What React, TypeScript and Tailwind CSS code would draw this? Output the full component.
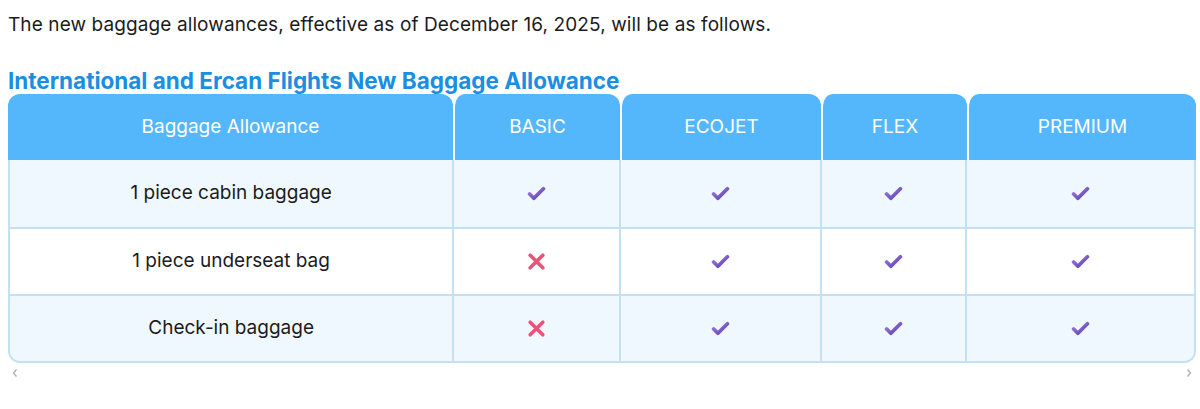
import React from "react";

const cols = ["w-[445px]", "w-[167px]", "w-[201px]", "w-[146px]", "w-[229px]"];
const heads = ["Baggage Allowance", "BASIC", "ECOJET", "FLEX", "PREMIUM"];

const rows: { label: string; values: boolean[] }[] = [
  { label: "1 piece cabin baggage", values: [true, true, true, true] },
  { label: "1 piece underseat bag", values: [false, true, true, true] },
  { label: "Check-in baggage", values: [false, true, true, true] },
];

const Check = () => (
  <svg width="19" height="15" viewBox="0 0 18 14">
    <defs>
      <linearGradient id="chk" x1="0" y1="0" x2="1" y2="1">
        <stop offset="0" stopColor="#9b7ee0" />
        <stop offset="1" stopColor="#5e3fb0" />
      </linearGradient>
    </defs>
    <path
      d="M2.5 7.5 L6.5 11.5 L15.5 2.5"
      fill="none"
      stroke="url(#chk)"
      strokeWidth="3.6"
      strokeLinecap="round"
      strokeLinejoin="round"
    />
  </svg>
);

const Cross = () => (
  <svg width="19" height="19" viewBox="0 0 18 18">
    <path
      d="M3 3 L15 15 M15 3 L3 15"
      fill="none"
      stroke="#ea5479"
      strokeWidth="3.4"
      strokeLinecap="round"
    />
  </svg>
);

export default function App() {
  return (
    <div className="bg-white px-2 pt-[13px] font-['Inter',sans-serif] text-[#1b1b1b]">
      {/* Intro */}
      <p className="text-[19px] leading-[23px] tracking-[0.1px]">
        The new baggage allowances, effective as of December 16, 2025, will be as follows.
      </p>

      <h2 className="mt-[31px] text-[22.5px] font-bold leading-[27px] text-[#1a8ee3]">
        International and Ercan Flights New Baggage Allowance
      </h2>

      {/* Table */}
      <div className="w-[1188px]">
        <div className="flex">
          {heads.map((h, i) => (
            <div
              key={h}
              className={`${cols[i]} flex h-[66px] items-center justify-center rounded-t-[12px] bg-[#55b7fb] text-[19px] text-white ${
                i > 0 ? "border-l-2 border-white" : ""
              }`}
            >
              {h}
            </div>
          ))}
        </div>
        <div className="overflow-hidden rounded-b-[12px] border-2 border-t-0 border-[#c3e1f3]">
          {rows.map((r, ri) => (
            <div
              key={r.label}
              className={`flex h-[67px] ${ri % 2 === 0 ? "bg-[#eef8fe]" : "bg-white"} ${
                ri > 0 ? "border-t-2 border-[#c3e1f3]" : ""
              }`}
            >
              <div className="flex w-[443px] items-center justify-center text-[19px]">
                {r.label}
              </div>
              {r.values.map((v, vi) => (
                <div
                  key={vi}
                  className={`${cols[vi + 1]} flex items-center justify-center border-l-2 border-[#c3e1f3]`}
                >
                  {v ? <Check /> : <Cross />}
                </div>
              ))}
            </div>
          ))}
        </div>
        {/* scroll hints */}
        <div className="mt-[5px] flex justify-between px-[3px] text-[#b0b0b0]">
          <svg width="8" height="10" viewBox="0 0 8 10">
            <path d="M5.5 1.5 L2.5 5 L5.5 8.5" fill="none" stroke="currentColor" strokeWidth="1.4" />
          </svg>
          <svg width="8" height="10" viewBox="0 0 8 10">
            <path d="M2.5 1.5 L5.5 5 L2.5 8.5" fill="none" stroke="currentColor" strokeWidth="1.4" />
          </svg>
        </div>
      </div>
    </div>
  );
}
